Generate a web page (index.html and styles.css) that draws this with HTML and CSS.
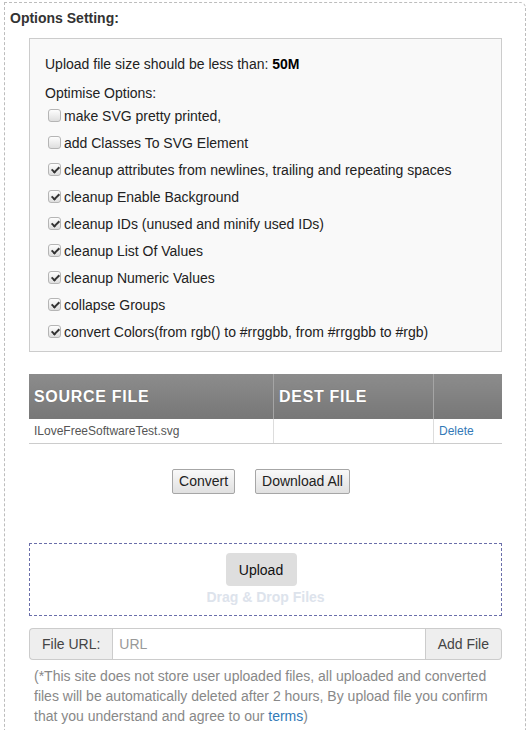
FILE: index.html
```html
<!DOCTYPE html>
<html>
<head>
<meta charset="utf-8">
<link rel="stylesheet" href="styles.css">
</head>
<body>
<div class="panel">
  <div class="panel-title">Options Setting:</div>
  <div class="panel-body">
    <div class="options">
      <p class="size">Upload file size should be less than: <b>50M</b></p>
      <div class="opt-label">Optimise Options:</div>
      <label class="opt"><input type="checkbox">make SVG pretty printed,</label>
      <label class="opt"><input type="checkbox">add Classes To SVG Element</label>
      <label class="opt"><input type="checkbox" checked>cleanup attributes from newlines, trailing and repeating spaces</label>
      <label class="opt"><input type="checkbox" checked>cleanup Enable Background</label>
      <label class="opt"><input type="checkbox" checked>cleanup IDs (unused and minify used IDs)</label>
      <label class="opt"><input type="checkbox" checked>cleanup List Of Values</label>
      <label class="opt"><input type="checkbox" checked>cleanup Numeric Values</label>
      <label class="opt"><input type="checkbox" checked>collapse Groups</label>
      <label class="opt"><input type="checkbox" checked>convert Colors(from rgb() to #rrggbb, from #rrggbb to #rgb)</label>
    </div>

    <table class="files">
      <thead>
        <tr><th class="c1">SOURCE FILE</th><th class="c2">DEST FILE</th><th class="c3"></th></tr>
      </thead>
      <tbody>
        <tr><td>ILoveFreeSoftwareTest.svg</td><td></td><td><a href="#" class="link">Delete</a></td></tr>
      </tbody>
    </table>

    <div class="actions">
      <button class="btn">Convert</button>
      <button class="btn">Download All</button>
    </div>

    <div class="dropzone">
      <button class="upload">Upload</button>
      <div class="drag">Drag &amp; Drop Files</div>
    </div>

    <div class="url-group">
      <span class="addon addon-left">File URL:</span>
      <input class="url-input" type="text" placeholder="URL">
      <span class="addon addon-right">Add File</span>
    </div>

    <p class="note">(*This site does not store user uploaded files, all uploaded and converted files will be automatically deleted after 2 hours, By upload file you confirm that you understand and agree to our <a href="#" class="link">terms</a>)</p>
  </div>
</div>
</body>
</html>
```

FILE: styles.css
```css
html, body {
  margin: 0;
  padding: 0;
  background: #fff;
  font-family: "Liberation Sans", Arial, sans-serif;
  font-size: 14px;
  color: #333;
}

.panel {
  margin: 2px 3px 0 4px;
  border: 1px dashed #bdbdbd;
  border-radius: 0 6px 0 0;
  padding: 5px 23px 40px 0;
}

.panel-title {
  padding-left: 5px;
  font-weight: bold;
  font-size: 14px;
  line-height: 20px;
  color: #333;
}

.panel-body {
  padding-left: 24px;
  margin-top: 10px;
}

.options {
  background: #f9f9f9;
  border: 1px solid #cccccc;
  padding: 15px 15px 6px 15px;
  color: #222;
}

.size {
  margin: 0 0 10px;
  line-height: 20px;
}

.size b {
  color: #000;
}

.opt-label {
  line-height: 18px;
}

.opt {
  display: flex;
  align-items: center;
  height: 27px;
  white-space: nowrap;
}

.opt input {
  -webkit-appearance: none;
  appearance: none;
  position: relative;
  width: 13px;
  height: 13px;
  margin: 0 3px 0 3px;
  border: 1px solid #b5b5b5;
  border-radius: 3px;
  background: linear-gradient(#fdfdfd, #dedede);
  flex: none;
}

.opt input:checked::after {
  content: "";
  position: absolute;
  left: 3.5px;
  top: 0.5px;
  width: 3px;
  height: 6px;
  border-right: 2px solid #333;
  border-bottom: 2px solid #333;
  transform: rotate(45deg);
}

.files {
  width: 100%;
  margin-top: 22px;
  border-collapse: collapse;
}

.files th {
  height: 45px;
  padding: 0 5px;
  text-align: left;
  font-size: 16px;
  font-weight: bold;
  letter-spacing: 0.7px;
  color: #fff;
  background: linear-gradient(#8c8c8c, #777777);
  text-shadow: 0 0 1px rgba(0, 0, 0, 0.2);
}

.files th + th {
  border-left: 1px solid #a5a5a5;
}

.files .c1 { width: 234px; }
.files .c2 { width: 149px; }

.files td {
  height: 24px;
  padding: 0 4px 0 5px;
  font-size: 12px;
  color: #555;
  border-bottom: 1px solid #cccccc;
}

.files td + td {
  border-left: 1px solid #dddddd;
}

.link {
  color: #337ab7;
  text-decoration: none;
}

.actions {
  display: flex;
  justify-content: center;
  gap: 20px;
  margin-top: 25px;
  padding-right: 9px;
}

.btn {
  font-family: "Liberation Sans", Arial, sans-serif;
  font-size: 14px;
  line-height: 17px;
  color: #222;
  padding: 3px 6px;
  border: 1px solid #a6a6a6;
  border-radius: 2px;
  background: linear-gradient(#f9f9f9, #e0e0e0);
}

.dropzone {
  margin-top: 49px;
  border: 1px dashed #6a6eaa;
  padding: 9px 0 8px;
  display: flex;
  flex-direction: column;
  align-items: center;
}

.upload {
  font-family: "Liberation Sans", Arial, sans-serif;
  font-size: 14px;
  color: #111;
  width: 71px;
  height: 33px;
  border: none;
  border-radius: 4px;
  background: #dedede;
  padding: 0;
  margin-right: 9px;
}

.drag {
  margin-top: 1px;
  line-height: 20px;
  font-weight: bold;
  color: #dde3ec;
}

.url-group {
  display: flex;
  height: 32px;
  margin-top: 12px;
}

.addon {
  display: flex;
  align-items: center;
  padding: 0 12px;
  background: #eeeeee;
  border: 1px solid #cccccc;
  color: #444;
}

.addon-left {
  border-radius: 4px 0 0 4px;
  border-right: none;
}

.addon-right {
  border-radius: 0 4px 4px 0;
  border-left: none;
}

.url-input {
  flex: 1;
  min-width: 0;
  margin: 0;
  border: 1px solid #cccccc;
  padding: 0 6px;
  font-family: "Liberation Sans", Arial, sans-serif;
  font-size: 14px;
  color: #555;
  box-sizing: border-box;
  height: 32px;
}

.url-input::placeholder {
  color: #999;
}

.note {
  margin: 6px 0 0;
  padding: 0 5px;
  line-height: 20px;
  color: #888;
}
```
